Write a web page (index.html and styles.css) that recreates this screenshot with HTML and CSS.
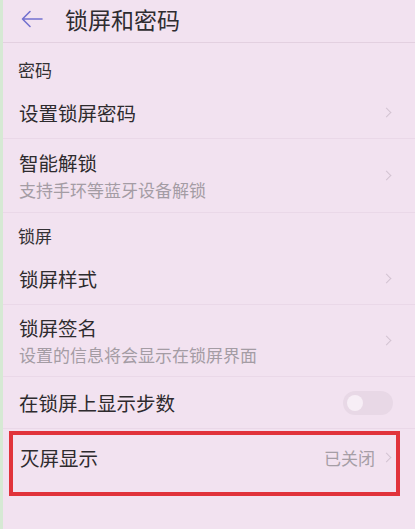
FILE: index.html
```html
<!DOCTYPE html>
<html lang="zh-CN">

<head>
    <meta charset="UTF-8">
    <meta name="viewport" content="width=device-width, initial-scale=1.0">
    <title>锁屏和密码</title>
    <link rel="stylesheet" href="styles.css">
</head>

<body>
    <div id="screen">
        <div id="header">
            <svg class="back-icon" width="22" height="18" viewBox="0 0 22 18">
                <path d="M21 9H2M9 1.5L1.5 9L9 16.5" fill="none" stroke="#7472cf" stroke-width="1.6" stroke-linecap="round" stroke-linejoin="round"/>
            </svg>
            <span id="header-title">锁屏和密码</span>
        </div>

        <div class="section-label">密码</div>
        <div class="row">
            <div class="row-text">
                <span class="row-title">设置锁屏密码</span>
            </div>
            <span class="chevron"></span>
        </div>
        <div class="row row-tall">
            <div class="row-text">
                <span class="row-title">智能解锁</span>
                <span class="row-sub">支持手环等蓝牙设备解锁</span>
            </div>
            <span class="chevron"></span>
        </div>

        <div class="section-label section-label-next">锁屏</div>
        <div class="row">
            <div class="row-text">
                <span class="row-title">锁屏样式</span>
            </div>
            <span class="chevron"></span>
        </div>
        <div class="row row-tall row-tall-2">
            <div class="row-text">
                <span class="row-title">锁屏签名</span>
                <span class="row-sub">设置的信息将会显示在锁屏界面</span>
            </div>
            <span class="chevron"></span>
        </div>
        <div class="row">
            <div class="row-text">
                <span class="row-title">在锁屏上显示步数</span>
            </div>
            <div class="toggle"><div class="toggle-knob"></div></div>
        </div>

        <div id="highlight">
            <div class="row row-boxed">
                <div class="row-text">
                    <span class="row-title">灭屏显示</span>
                </div>
                <span class="row-value">已关闭</span>
                <span class="chevron"></span>
            </div>
        </div>
    </div>
</body>

</html>
```

FILE: styles.css
```css
body,
html {
    margin: 0;
    height: 100%;
    background-color: #f2e2f0;
}

#screen {
    height: 100%;
    border-left: 3px solid #d6e9d4;
    box-sizing: border-box;
    font-family: "Noto Sans CJK SC", "Noto Sans", sans-serif;
    color: #2e2b2e;
}

#header {
    display: flex;
    align-items: center;
    height: 43px;
    padding-left: 18px;
    box-sizing: border-box;
    border-bottom: 1px solid #e3d0e0;
}

.back-icon {
    margin-top: -4px;
}

#header-title {
    margin-left: 22px;
    margin-top: -5px;
    font-size: 23px;
    line-height: 28px;
    color: #2f2c30;
}

.section-label {
    padding: 16px 0 6px 15px;
    font-size: 17px;
    line-height: 22px;
    color: #333033;
}

.section-label-next {
    padding-top: 12px;
}

.row {
    display: flex;
    align-items: center;
    height: 52px;
    padding: 0 23px 0 16px;
    box-sizing: border-box;
    border-bottom: 1px solid #ead8e8;
}

.row-tall {
    height: 74px;
}

.row-tall-2 {
    height: 72px;
    padding-bottom: 0;
}

.row-text {
    display: flex;
    flex-direction: column;
    flex: 1;
}

.row-title {
    font-size: 19.5px;
    line-height: 25px;
}

.row-sub {
    font-size: 17px;
    line-height: 22px;
    margin-top: 3.5px;
    color: #a49ca4;
}

.chevron {
    width: 6px;
    height: 6px;
    border-top: 1.5px solid #d3c3d2;
    border-right: 1.5px solid #d3c3d2;
    transform: rotate(45deg);
    margin-right: 2px;
}

.row-value {
    font-size: 17px;
    color: #a69ea6;
    margin-right: 8px;
}

.toggle {
    width: 50px;
    height: 24px;
    border-radius: 12px;
    background-color: #e8d8e6;
    display: flex;
    align-items: center;
    padding-left: 4px;
    box-sizing: border-box;
    margin-right: -1px;
}

.toggle-knob {
    width: 16px;
    height: 16px;
    border-radius: 50%;
    background-color: #f7eef6;
}

#highlight {
    margin: 2px 15px 0 6px;
    border: 4px solid #e1333b;
}

.row-boxed {
    height: 57px;
    padding: 0 4px 13px 7px;
    border-bottom: none;
}
```
